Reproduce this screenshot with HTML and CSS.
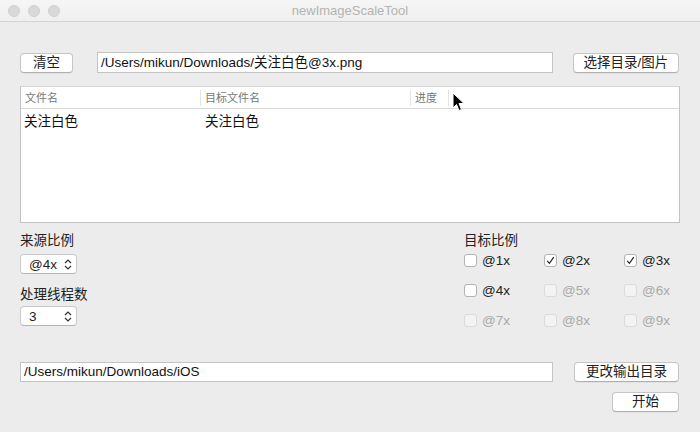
FILE: index.html
```html
<!DOCTYPE html>
<html>
<head>
<meta charset="utf-8">
<link rel="stylesheet" href="styles.css">
</head>
<body>
<div class="window">
  <div class="titlebar">
    <div class="lights">
      <span class="light"></span><span class="light"></span><span class="light"></span>
    </div>
    <div class="title">newImageScaleTool</div>
  </div>
  <div class="content">
    <div class="row top-row">
      <button class="btn btn-clear">清空</button>
      <div class="field field-src">/Users/mikun/Downloads/关注白色@3x.png</div>
      <button class="btn btn-choose">选择目录/图片</button>
    </div>

    <div class="table">
      <div class="thead">
        <div class="th c1">文件名</div>
        <div class="th c2">目标文件名</div>
        <div class="th c3">进度</div>
        <div class="th c4"></div>
      </div>
      <div class="trow">
        <div class="td c1">关注白色</div>
        <div class="td c2">关注白色</div>
        <div class="td c3"></div>
        <div class="td c4"></div>
      </div>
    </div>

    <div class="options">
      <div class="opt-left">
        <div class="label">来源比例</div>
        <div class="popup popup-first"><span>@4x</span>
          <svg class="updown" width="8" height="11" viewBox="0 0 8 11"><path d="M1 4 L4 1 L7 4 M1 7 L4 10 L7 7" fill="none" stroke="#333" stroke-width="1.2"/></svg>
        </div>
        <div class="label label-second">处理线程数</div>
        <div class="popup popup-second"><span>3</span>
          <svg class="updown" width="8" height="11" viewBox="0 0 8 11"><path d="M1 4 L4 1 L7 4 M1 7 L4 10 L7 7" fill="none" stroke="#333" stroke-width="1.2"/></svg>
        </div>
      </div>
      <div class="opt-right">
        <div class="label">目标比例</div>
        <div class="checks">
          <div class="check"><span class="box"></span><span>@1x</span></div>
          <div class="check"><span class="box"><svg width="11" height="11" viewBox="0 0 11 11"><path d="M2.2 5.8 L4.4 8.3 L8.8 2.2" fill="none" stroke="#222" stroke-width="1.2"/></svg></span><span>@2x</span></div>
          <div class="check"><span class="box"><svg width="11" height="11" viewBox="0 0 11 11"><path d="M2.2 5.8 L4.4 8.3 L8.8 2.2" fill="none" stroke="#222" stroke-width="1.2"/></svg></span><span>@3x</span></div>
          <div class="check"><span class="box"></span><span>@4x</span></div>
          <div class="check disabled"><span class="box"></span><span>@5x</span></div>
          <div class="check disabled"><span class="box"></span><span>@6x</span></div>
          <div class="check disabled"><span class="box"></span><span>@7x</span></div>
          <div class="check disabled"><span class="box"></span><span>@8x</span></div>
          <div class="check disabled"><span class="box"></span><span>@9x</span></div>
        </div>
      </div>
    </div>

    <div class="row bottom-row">
      <div class="field field-out">/Users/mikun/Downloads/iOS</div>
      <button class="btn btn-change">更改输出目录</button>
    </div>
    <div class="row start-row">
      <button class="btn btn-start">开始</button>
    </div>
  </div>

  <svg class="cursor" width="13" height="20" viewBox="0 0 13 20">
    <path d="M1 1 L1 16 L4.5 12.5 L7 18.5 L9.5 17.5 L7 11.5 L12 11.5 Z" fill="#000" stroke="#fff" stroke-width="1"/>
  </svg>
</div>
</body>
</html>
```

FILE: styles.css
```css
* { box-sizing: border-box; }
html, body { margin: 0; padding: 0; }
body {
  width: 700px;
  height: 432px;
  overflow: hidden;
  background: #ececec;
  font-family: "Liberation Sans", "Noto Sans CJK SC", sans-serif;
  font-size: 13px;
  color: #222;
}
.window { position: relative; width: 700px; height: 432px; }
.titlebar {
  height: 22px;
  background: linear-gradient(#f6f6f6, #efefef);
  border-bottom: 1px solid #d3d3d3;
  display: flex;
  align-items: center;
  position: relative;
}
.lights { display: flex; gap: 8px; padding-left: 8px; }
.light {
  width: 12px; height: 12px; border-radius: 50%;
  background: #d9d9d9;
  border: 1px solid #cfcfcf;
}
.title {
  position: absolute; left: 0; right: 0; top: 0;
  text-align: center; line-height: 22px;
  color: #b3b3b3; font-size: 13px;
}
.content { padding: 30px 20px 0 20px; display: flex; flex-direction: column; }
.row { display: flex; align-items: center; }
.btn {
  font-family: inherit; font-size: 13.5px; color: #222;
  height: 20px; padding: 0;
  background: #fff;
  border: 1px solid #c6c6c6;
  border-bottom-color: #b0b0b0;
  border-radius: 4px;
  box-shadow: 0 0.5px 0.5px rgba(0,0,0,0.08);
  line-height: 18px;
}
.btn-clear { width: 53px; margin-top: 1px; }
.field {
  height: 21px;
  background: #fff;
  border: 1px solid #c4c4c4;
  padding-left: 3px;
  line-height: 19px;
  font-size: 13.5px;
  color: #111;
  white-space: nowrap;
}
.field-src { width: 456px; margin-left: 24px; }
.btn-choose { width: 106px; margin-left: 20px; margin-top: 1px; }

.table {
  margin-top: 13px;
  height: 137px;
  background: #fff;
  border: 1px solid #c3c3c3;
  border-top-color: #d6d6d6;
}
.thead {
  display: flex; height: 22px;
  border-bottom: 1px solid #d9d9d9;
  align-items: center;
}
.th {
  font-size: 11px; color: #777;
  height: 16px; line-height: 16px;
  padding-left: 4px;
  border-right: 1px solid #e3e3e3;
}
.th.c4 { border-right: none; }
.c1 { width: 180px; }
.c2 { width: 210px; }
.c3 { width: 38px; }
.c4 { flex: 1; }
.trow { display: flex; height: 22px; align-items: center; }
.td { font-size: 13.5px; color: #111; padding-left: 4px; }
.td.c1 { padding-left: 3px; }

.options { display: flex; margin-top: 10px; }
.opt-left { flex: 0 0 444px; display: flex; flex-direction: column; }
.label { height: 16px; line-height: 16px; font-size: 13.5px; color: #222; }
.popup {
  width: 57px; height: 20px;
  background: #fff;
  border: 1px solid #cbcbcb;
  border-bottom-color: #b5b5b5;
  border-radius: 4px;
  display: flex; align-items: center; justify-content: space-between;
  padding: 0 4px 0 8px;
  font-size: 13.5px; color: #222;
}
.popup-first { margin-top: 5px; }
.label-second { margin-top: 13px; }
.popup-second { margin-top: 3px; }
.opt-right { flex: 1; display: flex; flex-direction: column; }
.checks {
  display: grid;
  grid-template-columns: 80px 80px auto;
  grid-auto-rows: 22px;
  row-gap: 8px;
}
.check { display: flex; align-items: center; gap: 5px; font-size: 13.5px; color: #222; }
.box {
  width: 13px; height: 13px;
  background: #fff;
  border: 1px solid #b3b3b3;
  border-radius: 3px;
  display: flex; align-items: center; justify-content: center;
}
.check.disabled { color: #a9a9a9; }
.check.disabled .box { background: #f3f3f3; border-color: #dadada; }

.bottom-row { margin-top: 31px; }
.field-out { width: 533px; height: 20px; line-height: 18px; }
.btn-change { width: 105px; margin-left: 21px; }
.start-row { justify-content: flex-end; margin-top: 10px; }
.btn-start { width: 67px; margin-right: 1px; }

.cursor { position: absolute; left: 452px; top: 92px; }
```
